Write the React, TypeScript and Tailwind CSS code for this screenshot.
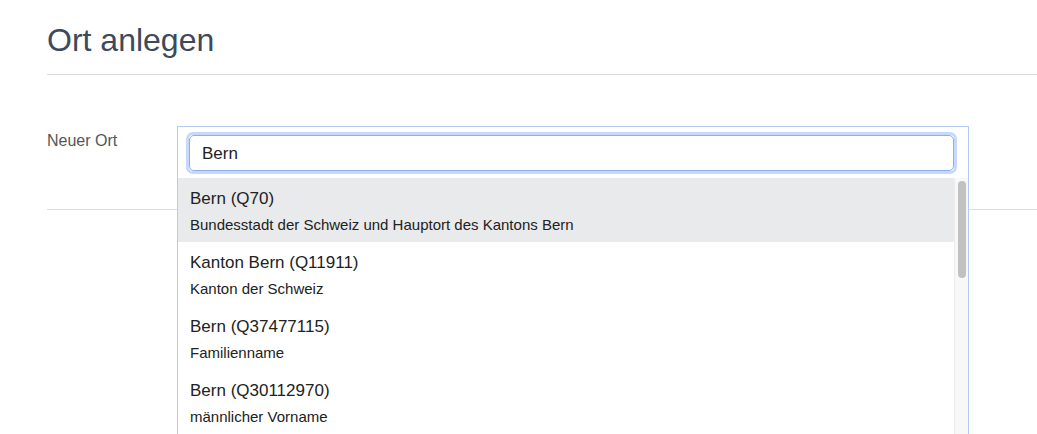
import React from "react";

const items = [
  { t: "Bern (Q70)", d: "Bundesstadt der Schweiz und Hauptort des Kantons Bern" },
  { t: "Kanton Bern (Q11911)", d: "Kanton der Schweiz" },
  { t: "Bern (Q37477115)", d: "Familienname" },
  { t: "Bern (Q30112970)", d: "männlicher Vorname" },
];

export default function App() {
  return (
    <div
      className="h-[434px] w-full overflow-hidden bg-white pl-[47px]"
      style={{ fontFamily: '"Liberation Sans", Arial, sans-serif' }}
    >
      <h1 className="mt-[22px] text-[32px] leading-[36px] font-normal text-[#3c4a5b]">Ort anlegen</h1>
      <div className="mt-[16px] border-t border-[#dcdcdc]" />
      <div className="mt-[51px] flex h-[83px]">
        <label className="w-[130px] pt-[3px] text-[16px] leading-[24px] text-[#555]">Neuer Ort</label>
        <div className="relative w-[792px]">
          <div className="absolute left-0 top-0 z-10 w-[792px] border border-[#b3cbf6] bg-white">
            <div className="ml-[8px] mt-[5px] mb-[4px] h-[42px] w-[771px] rounded-[7px] border-[3px] border-[#c7d9fb] bg-white">
              <div className="flex h-full items-center rounded-[5px] border border-[#8eaeee] pl-[12px] pt-[1px] text-[17px] text-[#222]">
                Bern
              </div>
            </div>
            <div className="flex h-[300px]">
              <ul className="flex-1 overflow-hidden">
                {items.map((it, i) => (
                  <li
                    key={it.t}
                    className={`h-[64px] pl-[12px] pt-[9px] ${i === 0 ? "bg-[#e9eaeb]" : "bg-white"}`}
                  >
                    <div className="text-[17px] leading-[24px] text-[#222]">{it.t}</div>
                    <div className="mt-[4px] text-[15px] leading-[20px] text-[#222]">{it.d}</div>
                  </li>
                ))}
              </ul>
              <div className="w-[14px] border-l border-[#ececec] bg-[#f8f8f8] pt-[3px]">
                <div className="mx-auto h-[97px] w-[8px] rounded-full bg-[#c1c1c1]" />
              </div>
            </div>
          </div>
        </div>
      </div>
      <div className="border-t border-[#dcdcdc]" />
    </div>
  );
}
